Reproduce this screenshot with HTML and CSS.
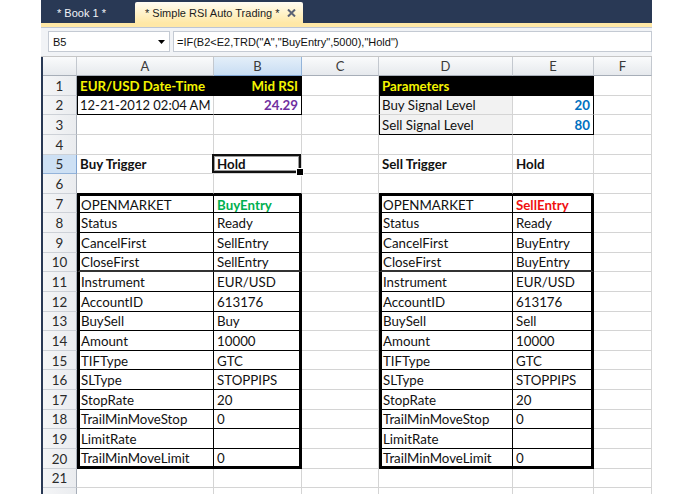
FILE: index.html
```html
<!DOCTYPE html>
<html>
<head>
<meta charset="utf-8">
<title>Simple RSI Auto Trading</title>
<link rel="stylesheet" href="styles.css">
</head>
<body>
<div class="win">
  <div class="tabs">
    <div class="tab first">* Book 1 *</div>
    <div class="tab on"><span>* Simple RSI Auto Trading *</span><svg class="x" width="9" height="8" viewBox="0 0 9 8"><path d="M1 0.5 L8 7.5 M8 0.5 L1 7.5" stroke="#5b6275" stroke-width="2"/></svg></div>
  </div>
  <div class="strip"></div>
  <div class="fbar">
    <div class="name"><span>B5</span><svg class="dd" width="7" height="4" viewBox="0 0 7 4"><path d="M0 0 H7 L3.5 4 Z" fill="#000"/></svg></div>
    <div class="fx">=IF(B2&lt;E2,TRD("A","BuyEntry",5000),"Hold")</div>
  </div>
  <div class="sheet">
    <div class="row hdr"><div class="ch"></div><div class="ch">A</div><div class="ch on">B</div><div class="ch">C</div><div class="ch">D</div><div class="ch">E</div><div class="ch">F</div></div>
    <div class="row"><div class="rh">1</div><div class="c blk b">EUR/USD Date-Time</div><div class="c blk b r">Mid RSI</div><div class="c"></div><div class="c blk b">Parameters</div><div class="c blk"></div><div class="c"></div></div>
    <div class="row"><div class="rh">2</div><div class="c kl kb dt">12-21-2012 02:04 AM</div><div class="c kr kb r b pur">24.29</div><div class="c"></div><div class="c gry kl">Buy Signal Level</div><div class="c kr r b blu">20</div><div class="c"></div></div>
    <div class="row"><div class="rh">3</div><div class="c"></div><div class="c"></div><div class="c"></div><div class="c gry kl kb">Sell Signal Level</div><div class="c kr kb r b blu">80</div><div class="c"></div></div>
    <div class="row"><div class="rh">4</div><div class="c"></div><div class="c"></div><div class="c"></div><div class="c"></div><div class="c"></div><div class="c"></div></div>
    <div class="row"><div class="rh on">5</div><div class="c b">Buy Trigger</div><div class="c b sel">Hold</div><div class="c"></div><div class="c b">Sell Trigger</div><div class="c b">Hold</div><div class="c"></div></div>
    <div class="row"><div class="rh">6</div><div class="c kb"></div><div class="c kb"></div><div class="c"></div><div class="c kb"></div><div class="c kb"></div><div class="c"></div></div>
    <div class="row"><div class="rh">7</div><div class="c TL in TT">OPENMARKET</div><div class="c TR kb TT b grn">BuyEntry</div><div class="c"></div><div class="c TL in TT">OPENMARKET</div><div class="c TR kb TT b red">SellEntry</div><div class="c"></div></div>
    <div class="row"><div class="rh">8</div><div class="c TL in">Status</div><div class="c TR kb">Ready</div><div class="c"></div><div class="c TL in">Status</div><div class="c TR kb">Ready</div><div class="c"></div></div>
    <div class="row"><div class="rh">9</div><div class="c TL in">CancelFirst</div><div class="c TR kb">SellEntry</div><div class="c"></div><div class="c TL in">CancelFirst</div><div class="c TR kb">BuyEntry</div><div class="c"></div></div>
    <div class="row"><div class="rh">10</div><div class="c TL in mb">CloseFirst</div><div class="c TR kb mb">SellEntry</div><div class="c"></div><div class="c TL in mb">CloseFirst</div><div class="c TR kb mb">BuyEntry</div><div class="c"></div></div>
    <div class="row"><div class="rh">11</div><div class="c TL in">Instrument</div><div class="c TR kb">EUR/USD</div><div class="c"></div><div class="c TL in">Instrument</div><div class="c TR kb">EUR/USD</div><div class="c"></div></div>
    <div class="row"><div class="rh">12</div><div class="c TL in">AccountID</div><div class="c TR kb">613176</div><div class="c"></div><div class="c TL in">AccountID</div><div class="c TR kb">613176</div><div class="c"></div></div>
    <div class="row"><div class="rh">13</div><div class="c TL in">BuySell</div><div class="c TR kb">Buy</div><div class="c"></div><div class="c TL in">BuySell</div><div class="c TR kb">Sell</div><div class="c"></div></div>
    <div class="row"><div class="rh">14</div><div class="c TL in">Amount</div><div class="c TR kb">10000</div><div class="c"></div><div class="c TL in">Amount</div><div class="c TR kb">10000</div><div class="c"></div></div>
    <div class="row"><div class="rh">15</div><div class="c TL in">TIFType</div><div class="c TR kb">GTC</div><div class="c"></div><div class="c TL in">TIFType</div><div class="c TR kb">GTC</div><div class="c"></div></div>
    <div class="row"><div class="rh">16</div><div class="c TL in">SLType</div><div class="c TR kb">STOPPIPS</div><div class="c"></div><div class="c TL in">SLType</div><div class="c TR kb">STOPPIPS</div><div class="c"></div></div>
    <div class="row"><div class="rh">17</div><div class="c TL in">StopRate</div><div class="c TR kb">20</div><div class="c"></div><div class="c TL in">StopRate</div><div class="c TR kb">20</div><div class="c"></div></div>
    <div class="row"><div class="rh">18</div><div class="c TL in">TrailMinMoveStop</div><div class="c TR kb">0</div><div class="c"></div><div class="c TL in">TrailMinMoveStop</div><div class="c TR kb">0</div><div class="c"></div></div>
    <div class="row"><div class="rh">19</div><div class="c TL in">LimitRate</div><div class="c TR kb"></div><div class="c"></div><div class="c TL in">LimitRate</div><div class="c TR kb"></div><div class="c"></div></div>
    <div class="row"><div class="rh">20</div><div class="c TL in TB">TrailMinMoveLimit</div><div class="c TR TB">0</div><div class="c"></div><div class="c TL in TB">TrailMinMoveLimit</div><div class="c TR TB">0</div><div class="c"></div></div>
    <div class="row"><div class="rh">21</div><div class="c"></div><div class="c"></div><div class="c"></div><div class="c"></div><div class="c"></div><div class="c"></div></div>
    <div class="row"><div class="rh"></div><div class="c"></div><div class="c"></div><div class="c"></div><div class="c"></div><div class="c"></div><div class="c"></div></div>
  </div>
</div>
</body>
</html>
```

FILE: styles.css
```css
* { box-sizing: border-box; margin: 0; padding: 0; }
html, body { width: 695px; height: 494px; overflow: hidden; background: #fff; }
body { font-family: Lato, "Liberation Sans", sans-serif; }

.win {
  margin-left: 41px;
  width: 611px;
  height: 494px;
  background: #293955;
  display: flex;
  flex-direction: column;
  overflow: hidden;
}

.tabs { height: 23px; flex: none; display: flex; align-items: flex-end; }
.tab {
  height: 21px;
  display: flex;
  align-items: center;
  font: 11px "Liberation Sans", Arial, sans-serif;
  color: #f2f4f8;
  white-space: nowrap;
}
.tab.first { width: 94px; padding-left: 16px; }
.tab.on {
  width: 168px;
  padding: 0 7px 0 10px;
  justify-content: space-between;
  color: #1c1c1c;
  background: linear-gradient(#fffcf3, #fff2c8 55%, #ffe8a6);
  border-radius: 2px 2px 0 0;
}
.tab.on .x { margin-top: 1px; }

.strip { height: 4px; flex: none; background: #ffe8a6; }

.fbar {
  height: 30px;
  flex: none;
  display: flex;
  gap: 3px;
  padding: 3px 0 4px 7px;
  background: #f1f3f6;
  border-top: 1px solid #bcc5d4;
  border-bottom: 1px solid #c6c6c6;
}
.name, .fx {
  height: 21px;
  background: #fff;
  border: 1px solid #c4cad3;
  display: flex;
  align-items: center;
  font: 11px "Liberation Sans", Arial, sans-serif;
  color: #111;
  white-space: nowrap;
}
.name { width: 122px; padding: 0 4px 0 4px; justify-content: space-between; }
.fx { flex: 1; padding-left: 3px; }

.sheet { padding-left: 2px; background: #293955; flex: 1; }

.row {
  display: grid;
  grid-template-columns: 34px 137px 88px 77px 134px 81px 58px;
  height: 19.63px;
  background: #fff;
}
.row.hdr { height: 19px; }

.ch {
  display: flex;
  align-items: center;
  justify-content: center;
  font-size: 13px;
  color: #3a3a3a;
  background: linear-gradient(#fafbfc, #e6e9ed);
  border-right: 1px solid #c3c8cf;
  border-bottom: 1px solid #a7aeb8;
}
.ch.on { background: linear-gradient(#e4eff9, #c8ddf3); border-right-color: #94b4da; border-bottom-color: #7fa3d1; }

.rh {
  display: flex;
  align-items: center;
  justify-content: center;
  font-size: 13.4px;
  color: #2a2a2a;
  background: linear-gradient(90deg, #f4f5f7, #eaecef);
  border-right: 1px solid #a7aeb8;
  border-bottom: 1px solid #cdd1d7;
  padding-top: 1px;
}
.rh.on { background: #cde0f4; border-bottom-color: #93b3da; border-right-color: #7fa3d1; }

.c {
  display: flex;
  align-items: center;
  padding: 1px 3px 0 3px;
  font-size: 13.3px;
  color: #111;
  white-space: nowrap;
  overflow: hidden;
  border-right: 1px solid #d4d4d4;
  border-bottom: 1px solid #d4d4d4;
}
.c.dt { font-size: 13px; }
.r { justify-content: flex-end; }
.b { font-weight: 700; }
.blk { background: #000; color: #f4f400; border-color: #000; }
.gry { background: #f2f2f2; }
.pur { color: #7030a0; }
.blu { color: #0070c0; }
.grn { color: #00b050; }
.red { color: #f01010; }

.kl { border-left: 1px solid #000; padding-left: 2px; }
.kr { border-right-color: #000; }
.kb { border-bottom-color: #000; }
.in { border-right-color: #000; border-bottom-color: #000; }
.TL { border-left: 3px solid #000; padding-left: 1px; }
.TR { border-right: 3px solid #000; }
.TT { border-top: 2px solid #000; }
.TB { border-bottom: 3px solid #000; }
.mb { border-bottom: 2px solid #333; }

.sel { position: relative; overflow: visible; }
.sel::before {
  content: "";
  position: absolute;
  left: -2px;
  top: -1px;
  right: 0;
  bottom: 0;
  border: 2px solid #111;
  box-shadow: inset 0 0 0 1px #9a9a9a;
}
.sel::after {
  content: "";
  position: absolute;
  right: -3px;
  bottom: -3px;
  width: 6px;
  height: 6px;
  background: #000;
  border: 1px solid #fff;
}
```
